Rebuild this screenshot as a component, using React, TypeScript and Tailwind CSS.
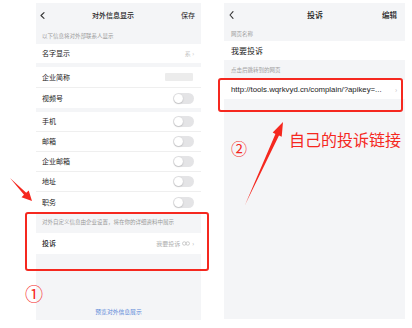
import React from "react";

const font = { fontFamily: '"Noto Sans CJK SC", "Noto Sans", sans-serif' };

function Back({ w = 4, h = 7 }: { w?: number; h?: number }) {
  return (
    <svg width={w + 1} height={h + 1} viewBox={`0 0 ${w + 1} ${h + 1}`} fill="none" stroke="#333" strokeWidth="1.1" strokeLinecap="round" strokeLinejoin="round">
      <path d={`M${w} 0.7 L1 ${(h + 1) / 2} L${w} ${h + 0.3}`} />
    </svg>
  );
}

function Toggle() {
  return (
    <div className="w-[21px] h-[11px] rounded-full bg-[#e4e4e6] flex items-center px-[1px]">
      <div className="w-[9px] h-[9px] rounded-full bg-white shadow-[0_0.5px_1.5px_rgba(0,0,0,0.25)]" />
    </div>
  );
}

function ToggleRow({ label, last }: { label: string; last?: boolean }) {
  return (
    <div className={`h-[20px] bg-white flex items-center justify-between pl-[6px] pr-[7px] ${last ? "" : "border-b border-[#efefef]"}`}>
      <span className="text-[7px] text-[#222]">{label}</span>
      <Toggle />
    </div>
  );
}

function LeftPanel() {
  return (
    <div className="ml-[36px] mt-[3px] w-[165px] h-[317px] bg-[#f4f5f7] flex flex-col">
      <div className="h-[25px] flex items-center justify-between pl-[4px] pr-[5px]">
        <Back w={4} h={6} />
        <span className="text-[7px] text-[#222] font-medium">对外信息显示</span>
        <span className="text-[7px] text-[#222] pr-[1px]">保存</span>
      </div>
      <div className="h-[16px] flex items-center px-[6px]">
        <span className="text-[5.5px] text-[#9a9a9a]">以下信息将对外部联系人显示</span>
      </div>
      <div className="h-[19px] bg-white flex items-center justify-between pl-[6px] pr-[7px]">
        <span className="text-[7px] text-[#222]">名字显示</span>
        <span className="text-[6px] text-[#c4c4c4]">系 ›</span>
      </div>
      <div className="h-[4px]" />
      <div className="h-[21px] bg-white flex items-center justify-between pl-[6px] pr-[8px] border-b border-[#efefef]">
        <span className="text-[7px] text-[#222]">企业简称</span>
        <div className="w-[28px] h-[8px] bg-[#ececec] rounded-[1px]" />
      </div>
      <ToggleRow label="视频号" last />
      <div className="h-[4px]" />
      <ToggleRow label="手机" />
      <ToggleRow label="邮箱" />
      <ToggleRow label="企业邮箱" />
      <ToggleRow label="地址" />
      <ToggleRow label="职务" last />
      <div className="h-[21px] flex items-center px-[6px]">
        <span className="text-[5.5px] text-[#9a9a9a]">对外自定义信息由企业设置，将在你的详细资料中展示</span>
      </div>
      <div className="h-[21px] bg-white flex items-center justify-between pl-[6px] pr-[7px]">
        <span className="text-[7px] text-[#222] font-medium">投诉</span>
        <div className="flex items-center gap-[2px]">
          <span className="text-[6px] text-[#b0b0b0]">我要投诉</span>
          <svg width="8" height="5" viewBox="0 0 8 5" fill="none" stroke="#b8b8b8" strokeWidth="0.7">
            <rect x="0.5" y="0.8" width="3.6" height="3.4" rx="1.7" />
            <rect x="3.9" y="0.8" width="3.6" height="3.4" rx="1.7" />
          </svg>
          <span className="text-[6px] text-[#b0b0b0]">›</span>
        </div>
      </div>
      <div className="flex-1 flex items-end justify-center pb-[3px]">
        <span className="text-[5.8px] text-[#5b88d8]">预览对外信息展示</span>
      </div>
    </div>
  );
}

function RightPanel() {
  return (
    <div className="ml-[23px] mt-[3px] w-[181px] h-[316px] bg-[#f4f5f7] flex flex-col">
      <div className="h-[24px] flex items-center justify-between pl-[5px] pr-[6px]">
        <Back w={4} h={7} />
        <span className="text-[8px] text-[#222] font-medium pl-[14px]">投诉</span>
        <span className="text-[7.5px] text-[#222] font-medium pr-[2px]">编辑</span>
      </div>
      <div className="h-[14px] flex items-center px-[7px]">
        <span className="text-[5.5px] text-[#a0a0a0]">网页名称</span>
      </div>
      <div className="h-[19px] bg-white flex items-center px-[7px]">
        <span className="text-[8px] text-[#222]">我要投诉</span>
      </div>
      <div className="h-[20px] flex items-center px-[7px] pt-[1px]">
        <span className="text-[5.5px] text-[#a0a0a0]">点击后跳转到的网页</span>
      </div>
      <div className="h-[19px] bg-white flex items-center justify-between pl-[7px] pr-[8px]">
        <span className="text-[7.8px] text-[#222]" style={{ fontFamily: '"Liberation Sans", Arial, sans-serif' }}>
          http://tools.wqrkvyd.cn/complain/?apikey=...
        </span>
        <span className="text-[7px] text-[#c0c0c0]">›</span>
      </div>
      <div className="flex-1" />
    </div>
  );
}

export default function App() {
  return (
    <div className="relative w-[412px] h-[328px] bg-white overflow-hidden flex items-start" style={font}>
      <LeftPanel />
      <RightPanel />

      {/* annotation boxes */}
      <div className="absolute left-[25px] top-[212px] w-[184px] h-[59px] border-2 border-[#f5281f] rounded-[3px]" />
      <div className="absolute left-[218px] top-[78px] w-[185px] h-[34px] border-2 border-[#f5281f] rounded-[3px]" />

      {/* circled numbers */}
      <div className="absolute left-[25px] top-[284px] text-[18px] leading-none text-[#f5281f]">①</div>
      <div className="absolute left-[231px] top-[140px] text-[16px] leading-none text-[#f5281f]">②</div>

      {/* red caption */}
      <div className="absolute left-[289px] top-[131px] text-[16px] leading-none text-[#f5281f] whitespace-nowrap">自己的投诉链接</div>

      {/* arrows */}
      <svg className="absolute left-0 top-0 pointer-events-none" width="412" height="328" viewBox="0 0 412 328">
        <polygon
          points="10,178 26.2,192.8 28.7,190.4 32,201 21.5,197.3 24,194.8"
          fill="#f5281f"
        />
        <polygon
          points="245,205 279,135.5 281.7,136.8 283,122 272.7,132.6 275.4,133.9"
          fill="#f5281f"
        />
      </svg>
    </div>
  );
}
